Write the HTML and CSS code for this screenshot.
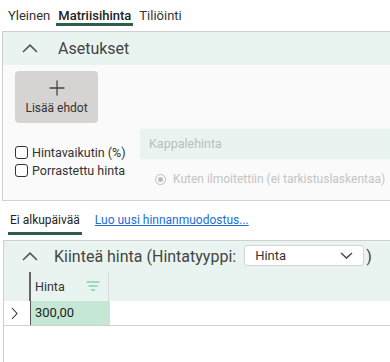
FILE: index.html
```html
<!DOCTYPE html>
<html lang="fi">
<head>
<meta charset="utf-8">
<title>Matriisihinta</title>
<link rel="stylesheet" href="styles.css">
</head>
<body>
<nav class="tabs">
  <span class="tab">Yleinen</span>
  <span class="tab active">Matriisihinta</span>
  <span class="tab">Tiliöinti</span>
</nav>

<section class="panel settings">
  <header class="panel-head">
    <svg class="chev" width="16" height="9" viewBox="0 0 16 9"><path d="M1 8 L8 1.2 L15 8" fill="none" stroke="#555" stroke-width="1.6"/></svg>
    <h2 class="panel-title">Asetukset</h2>
  </header>
  <div class="settings-body">
    <button class="add-btn" type="button">
      <svg width="16" height="16" viewBox="0 0 16 16"><path d="M8 0.5 V15.5 M0.5 8 H15.5" stroke="#444" stroke-width="1.3"/></svg>
      <span>Lisää ehdot</span>
    </button>
    <div class="options">
      <div class="checks">
        <label class="check"><span class="cb"></span>Hintavaikutin (%)</label>
        <label class="check"><span class="cb"></span>Porrastettu hinta</label>
      </div>
      <div class="unit">
        <div class="unit-head">Kappalehinta</div>
        <label class="radio"><span class="rd"></span>Kuten ilmoitettiin (ei tarkistuslaskentaa)</label>
      </div>
    </div>
  </div>
</section>

<nav class="tabs2">
  <span class="tab2">Ei alkupäivää</span>
  <a class="link" href="#">Luo uusi hinnanmuodostus...</a>
</nav>

<section class="panel fixed">
  <header class="panel-head head2">
    <svg class="chev" width="16" height="9" viewBox="0 0 16 9"><path d="M1 8 L8 1.2 L15 8" fill="none" stroke="#555" stroke-width="1.6"/></svg>
    <h2 class="panel-title t2">Kiinteä hinta (Hintatyyppi:</h2>
    <div class="select">
      <span>Hinta</span>
      <svg width="13" height="7" viewBox="0 0 13 7"><path d="M1 1 L6.5 6 L12 1" fill="none" stroke="#444" stroke-width="1.4"/></svg>
    </div>
    <span class="paren">)</span>
  </header>
  <div class="grid">
    <div class="grid-head">
      <div class="gutter"></div>
      <div class="col-head">
        <span>Hinta</span>
        <svg width="14" height="10" viewBox="0 0 14 10"><path d="M0.5 1 H13.5 M2.5 5 H11.5 M5 9 H9" stroke="#86cfab" stroke-width="1.4"/></svg>
      </div>
      <div class="fill"></div>
    </div>
    <div class="grid-row">
      <div class="gutter row-sel">
        <svg width="7" height="13" viewBox="0 0 7 13"><path d="M1 1 L6 6.5 L1 12" fill="none" stroke="#333" stroke-width="1.1"/></svg>
      </div>
      <div class="cell">300,00</div>
      <div class="fill"></div>
    </div>
  </div>
</section>
</body>
</html>
```

FILE: styles.css
```css
* { box-sizing: border-box; }
html, body { margin: 0; padding: 0; background: #fff; }
body {
  width: 390px;
  height: 362px;
  overflow: hidden;
  font-family: Roboto, "Liberation Sans", sans-serif;
  color: #333;
}

.tabs {
  display: flex;
  gap: 4px;
  padding: 8px 0 0 6px;
  margin-bottom: 5px;
  font-size: 13px;
  line-height: 15px;
}
.tab {
  padding: 0 2px 0 2px;
  border-bottom: 3px solid transparent;
  color: #333;
}
.tab.active {
  font-weight: 500;
  color: #222;
  border-bottom-color: #2b5d48;
}

.panel {
  border-top: 1px solid #cfcfcf;
  border-left: 1px solid #cfcfcf;
}
.settings {
  margin-left: 2px;
  background: #fafafa;
  border-bottom: 1px solid #d2d2d2;
}
.panel-head {
  display: flex;
  align-items: center;
  height: 33px;
  background: #e9f4f0;
  padding-left: 19px;
}
.chev { flex: none; display: block; }
.panel-title {
  margin: 0 0 0 20px;
  font-size: 16px;
  font-weight: 400;
  color: #444;
  line-height: 20px;
}

.settings-body {
  padding: 6px 0 0 12px;
  height: 135px;
}
.add-btn {
  display: flex;
  flex-direction: column;
  align-items: center;
  width: 83px;
  height: 52px;
  padding: 9px 0 0 0;
  border: none;
  border-radius: 4px;
  background: #d6d4d3;
  font-family: inherit;
  font-size: 12px;
  line-height: 14px;
  color: #333;
}
.add-btn svg { display: block; margin-bottom: 5px; }

.options {
  display: flex;
  margin-top: 6px;
}
.checks {
  flex: none;
  width: 125px;
  padding-top: 16px;
  display: flex;
  flex-direction: column;
  gap: 3px;
}
.check {
  display: flex;
  align-items: center;
  gap: 4px;
  font-size: 12.5px;
  line-height: 15px;
  color: #333;
  white-space: nowrap;
}
.cb {
  width: 13px;
  height: 13px;
  border: 1.2px solid #333;
  border-radius: 3px;
  background: #fff;
  flex: none;
}
.unit { flex: 1; min-width: 0; }
.unit-head {
  height: 30px;
  background: #e9f4f0;
  padding-left: 9px;
  font-size: 12.5px;
  line-height: 30px;
  color: #b9bebc;
}
.radio {
  display: flex;
  align-items: center;
  gap: 7px;
  margin: 13px 0 0 15px;
  font-size: 12px;
  line-height: 15px;
  color: #c4c4c4;
  white-space: nowrap;
}
.rd {
  width: 11px;
  height: 11px;
  border: 1px solid #bdbdbd;
  border-radius: 50%;
  flex: none;
  display: flex;
  align-items: center;
  justify-content: center;
}
.rd::after {
  content: "";
  width: 5px;
  height: 5px;
  border-radius: 50%;
  background: #bdbdbd;
}

.tabs2 {
  display: flex;
  align-items: flex-start;
  gap: 13px;
  padding: 12px 0 0 8px;
  margin-bottom: 5px;
  font-size: 12px;
  line-height: 14px;
}
.tab2 {
  padding: 0 2px 5px 2px;
  border-bottom: 3px solid #2b5d48;
  color: #222;
}
.link {
  color: #1a6fd6;
  text-decoration: underline;
}

.fixed {
  margin-left: 3px;
  height: 122px;
}
.head2 {
  height: 31px;
  padding-left: 18px;
}
.t2 { margin-left: 16px; font-size: 16px; }
.select {
  display: flex;
  align-items: center;
  justify-content: space-between;
  width: 120px;
  height: 21px;
  margin: 0 0 2px 8px;
  padding: 0 10px 0 10px;
  background: #fff;
  border: 1px solid #d4d4d4;
  border-radius: 3px;
  font-size: 13px;
  color: #333;
}
.paren {
  margin-left: 2px;
  font-size: 16px;
  color: #444;
}

.grid-head {
  display: flex;
  height: 29px;
  background: #e9f4f0;
}
.gutter { width: 25px; flex: none; }
.col-head {
  width: 80px;
  border-left: 2px solid #666;
  border-right: 1px solid #dcdcdc;
  display: flex;
  align-items: center;
  justify-content: space-between;
  padding: 0 8px 0 4px;
  font-size: 12.5px;
  color: #333;
}
.col-head svg { display: block; margin-top: -2px; }
.fill { flex: 1; }
.grid-row {
  display: flex;
  height: 25px;
  border-bottom: 1px solid #cfcfcf;
  background: #fff;
}
.row-sel {
  display: flex;
  align-items: center;
  padding-left: 7px;
}
.cell {
  width: 80px;
  margin-left: 1px;
  border-left: 1px solid #555;
  background: #c4e7d6;
  padding-left: 4px;
  font-size: 13px;
  line-height: 24px;
  color: #222;
}
```
